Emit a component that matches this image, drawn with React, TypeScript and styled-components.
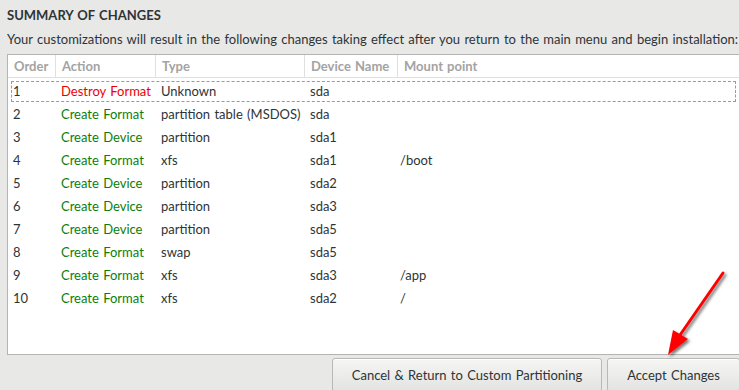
import React from "react";
import styled, { createGlobalStyle } from "styled-components";

const Global = createGlobalStyle`
  html, body {
    margin: 0;
    padding: 0;
    background: #e8e8e7;
    overflow: hidden;
  }
  body {
    font-family: Lato, "Open Sans", "DejaVu Sans", sans-serif;
    font-size: 13px;
    color: #2e3436;
    word-spacing: 1px;
  }
`;

const Root = styled.div`
  position: relative;
  width: 733px;
  height: 390px;
  padding: 7px 0 0 7px;
  box-sizing: content-box;
`;

const Title = styled.div`
  font-weight: 700;
  line-height: 16px;
  color: #2e3436;
`;

const Desc = styled.div`
  margin-top: 8px;
  line-height: 16px;
  white-space: nowrap;
  color: #2e3436;
`;

const Table = styled.div`
  margin-top: 7px;
  height: 299px;
  border: 1px solid #b4b4b3;
  background: #fff;
`;

const cols = "48px 100px 149px 93px 1fr";

const HeaderRow = styled.div`
  display: grid;
  grid-template-columns: ${cols};
  height: 22px;
  border-bottom: 1px solid #e0e0df;
`;

const HeaderCell = styled.div<{ $last?: boolean }>`
  padding-left: 6px;
  line-height: 22px;
  font-weight: 700;
  color: #a3a3a3;
  border-right: ${(p) => (p.$last ? "none" : "1px solid #e0e0df")};
  white-space: nowrap;
  overflow: hidden;
`;

const Body = styled.div`
  padding-top: 2px;
`;

const Row = styled.div<{ $focus?: boolean }>`
  display: grid;
  grid-template-columns: ${cols};
  height: 23px;
  margin: 0 2px 0 2px;
  outline: ${(p) => (p.$focus ? "1px dashed #9a9a9a" : "none")};
  outline-offset: -2px;
`;

const Cell = styled.div<{ $color?: string; $pad?: number }>`
  padding-left: ${(p) => p.$pad ?? 3}px;
  line-height: 23px;
  color: ${(p) => p.$color ?? "#2e3436"};
  white-space: nowrap;
`;

const ButtonBar = styled.div`
  display: flex;
  gap: 5px;
  margin-top: 3px;
  padding-left: 325px;
`;

const Button = styled.button<{ $w: number }>`
  width: ${(p) => p.$w}px;
  height: 34px;
  font-family: inherit;
  font-size: 13px;
  word-spacing: 1px;
  color: #2e3436;
  background: linear-gradient(#f5f5f4, #e3e3e2);
  border: 1px solid #b8b8b7;
  border-radius: 3px;
  padding: 0;
  box-shadow: inset 0 1px 0 #fff;
`;

const ArrowSvg = styled.svg`
  position: absolute;
  left: 0;
  top: 0;
  pointer-events: none;
`;

const rows: [string, string, string, string, string][] = [
  ["1", "Destroy Format", "Unknown", "sda", ""],
  ["2", "Create Format", "partition table (MSDOS)", "sda", ""],
  ["3", "Create Device", "partition", "sda1", ""],
  ["4", "Create Format", "xfs", "sda1", "/boot"],
  ["5", "Create Device", "partition", "sda2", ""],
  ["6", "Create Device", "partition", "sda3", ""],
  ["7", "Create Device", "partition", "sda5", ""],
  ["8", "Create Format", "swap", "sda5", ""],
  ["9", "Create Format", "xfs", "sda3", "/app"],
  ["10", "Create Format", "xfs", "sda2", "/"],
];

export default function App() {
  return (
    <>
      <Global />
      <Root>
        <Title>SUMMARY OF CHANGES</Title>
        <Desc>
          Your customizations will result in the following changes taking effect after you return to the main menu and begin installation:
        </Desc>
        <Table>
          <HeaderRow>
            <HeaderCell>Order</HeaderCell>
            <HeaderCell>Action</HeaderCell>
            <HeaderCell>Type</HeaderCell>
            <HeaderCell>Device Name</HeaderCell>
            <HeaderCell $last>Mount point</HeaderCell>
          </HeaderRow>
          <Body>
            {rows.map((r, i) => (
              <Row key={r[0]} $focus={i === 0}>
                <Cell>{r[0]}</Cell>
                <Cell $color={r[1].startsWith("Destroy") ? "#ee0000" : "#0a800a"}>{r[1]}</Cell>
                <Cell>{r[2]}</Cell>
                <Cell>{r[3]}</Cell>
                <Cell $pad={0}>{r[4]}</Cell>
              </Row>
            ))}
          </Body>
        </Table>
        <ButtonBar>
          <Button $w={270}>Cancel &amp; Return to Custom Partitioning</Button>
          <Button $w={133}>Accept Changes</Button>
        </ButtonBar>
        <ArrowSvg width="739" height="390" viewBox="0 0 739 390">
          <defs>
            <filter id="sh" x="-50%" y="-50%" width="200%" height="200%">
              <feDropShadow dx="2" dy="2" stdDeviation="1.5" floodColor="#000" floodOpacity="0.55" />
            </filter>
          </defs>
          <g filter="url(#sh)">
            <line x1="723" y1="273" x2="680" y2="335" stroke="#f00" strokeWidth="3" strokeLinecap="round" />
            <polygon points="668,355 673,330 688,339" fill="#f00" />
          </g>
        </ArrowSvg>
      </Root>
    </>
  );
}
